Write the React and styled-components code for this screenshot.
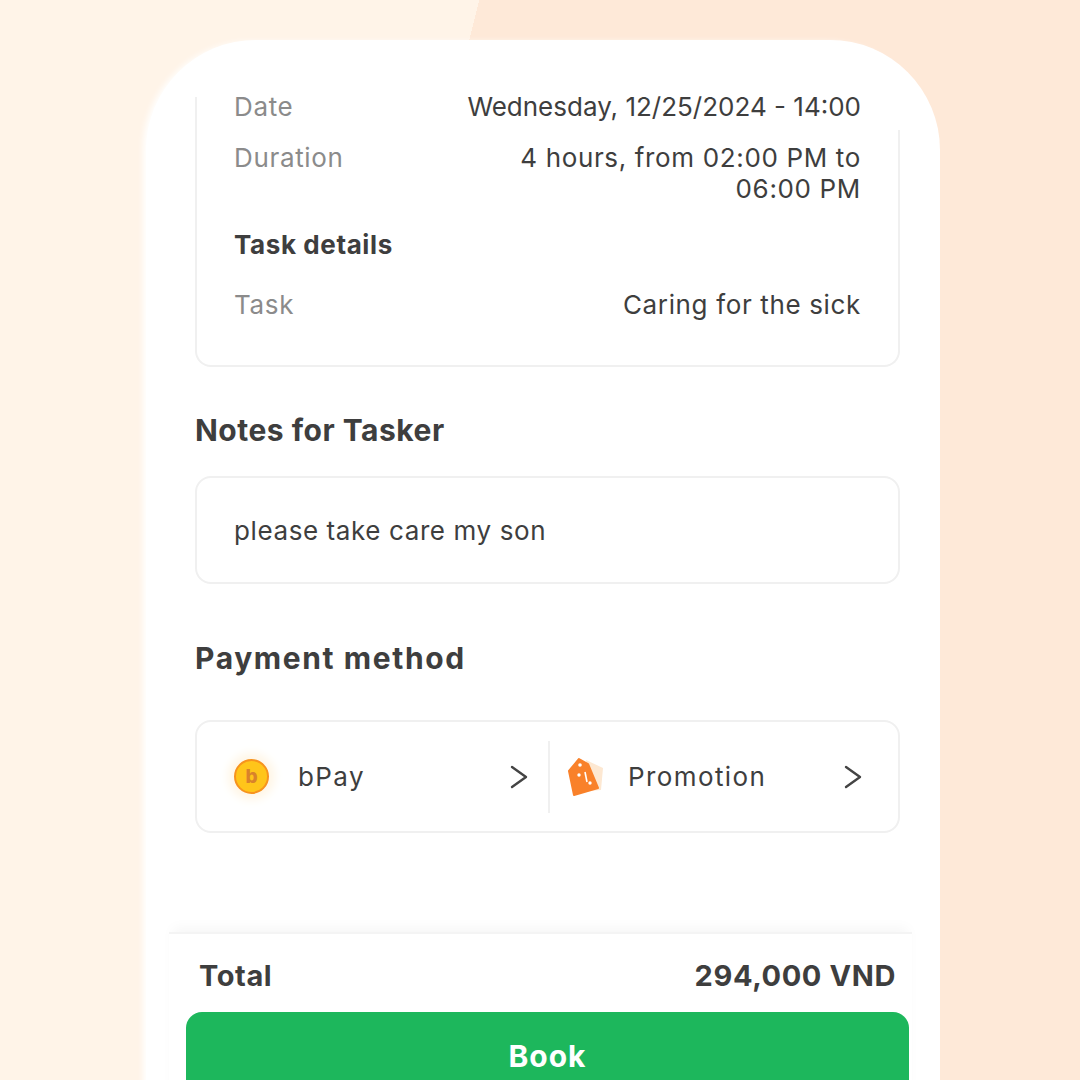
import React from 'react';
import styled, { createGlobalStyle } from 'styled-components';

const GlobalStyle = createGlobalStyle`
  html, body {
    margin: 0;
    padding: 0;
  }
  body {
    font-family: "Inter", "Open Sans", sans-serif;
    color: #3e3e3e;
  }
`;

const Page = styled.div`
  width: 1080px;
  height: 1080px;
  overflow: hidden;
  padding: 40px 140px 0 146px;
  box-sizing: border-box;
  background: linear-gradient(104deg, #fff4e8 465px, #fee9d8 465px);
`;

const Phone = styled.div`
  height: 1100px;
  background: #fff;
  border-radius: 110px 110px 0 0;
  box-shadow: -5px 0 6px -2px #fff;
  padding-top: 57px;
  box-sizing: border-box;
`;

const Content = styled.div`
  margin: 0 40px 0 49px;
  height: 835px;
`;

const Card = styled.div`
  position: relative;
  background: #fff;
  border: 2px solid #f0f0f0;
  border-radius: 16px;
  box-sizing: border-box;
`;

const DetailCard = styled(Card)`
  display: flow-root;
  border-top: none;
  border-radius: 0 0 16px 16px;
  height: 270px;
  padding: 0 37px;

  &::before {
    content: '';
    position: absolute;
    top: 0;
    right: -2px;
    width: 2px;
    height: 33px;
    background: #fff;
  }
`;

const Row = styled.div`
  display: flex;
  justify-content: space-between;
  align-items: flex-start;
  font-size: 26px;
  line-height: 31px;
  margin-top: ${(p) => p.$top}px;
  letter-spacing: 0.65px;
`;

const Label = styled.span`
  color: #8b8b8b;
`;

const Value = styled.span`
  text-align: right;
  max-width: 400px;
  letter-spacing: ${(p) => (p.$tight ? '0' : 'inherit')};
`;

const SubTitle = styled.div`
  font-size: 26px;
  line-height: 31px;
  font-weight: 700;
  letter-spacing: 0.6px;
  margin-top: 25px;
`;

const Heading = styled.h2`
  margin: ${(p) => p.$top}px 0 ${(p) => p.$bottom}px;
  font-size: 30px;
  line-height: 36px;
  font-weight: 700;
  letter-spacing: ${(p) => p.$spacing}px;
`;

const NoteCard = styled(Card)`
  height: 108px;
  display: flex;
  align-items: center;
  padding-left: 37px;
  font-size: 26px;
  letter-spacing: 0.6px;
`;

const PayCard = styled(Card)`
  height: 113px;
  display: flex;
  align-items: center;
`;

const PayItem = styled.div`
  flex: ${(p) => (p.$divided ? '1' : '0 0 351px')};
  box-sizing: border-box;
  height: 72px;
  display: flex;
  align-items: center;
  font-size: 26px;
  padding: ${(p) => p.$pad};
  border-left: ${(p) => (p.$divided ? '2px solid #f0f0f0' : 'none')};
`;

const PayName = styled.span`
  flex: 1;
  letter-spacing: 1.4px;
`;

const Coin = styled.div`
  width: 35px;
  height: 35px;
  border-radius: 50%;
  box-sizing: border-box;
  background: #ffc51a;
  border: 2px solid #f7931e;
  box-shadow: 0 0 10px 6px #fff6e6;
  color: #d9822b;
  font-size: 19px;
  font-weight: 800;
  display: flex;
  align-items: center;
  justify-content: center;
  margin: 0 29px 0 37px;
`;

const TagIcon = styled.svg`
  width: 40px;
  height: 44px;
  margin-right: 22px;
`;

const Chevron = styled.svg`
  width: 18px;
  height: 24px;
`;

const Footer = styled.div`
  margin: 0 28px 0 23px;
  border-top: 2px solid #f4f4f4;
  box-shadow: 0 -8px 12px -4px #f6f6f6;
  position: relative;
`;

const TotalRow = styled.div`
  display: flex;
  justify-content: space-between;
  align-items: center;
  box-sizing: border-box;
  height: 78px;
  padding: 4px 16px 0 30px;
  font-size: 29px;
  font-weight: 700;
  letter-spacing: 0.6px;
  background: #fff;
`;

const BookButton = styled.button`
  display: block;
  width: 723px;
  height: 87px;
  margin-left: 17px;
  border: none;
  border-radius: 16px;
  background: #1db75c;
  color: #fff;
  font-family: inherit;
  font-size: 30px;
  font-weight: 700;
  letter-spacing: 1px;
`;

const ChevronRight = () => (
  <Chevron viewBox="0 0 18 24">
    <polyline points="2,2 16,12 2,22" fill="none" stroke="#444" strokeWidth="2.4" strokeLinejoin="round" strokeLinecap="round" />
  </Chevron>
);

const App = () => (
  <Page>
    <GlobalStyle />
    <Phone>
      <Content>
        <DetailCard>
          <Row $top={-6}>
            <Label>Date</Label>
            <Value $tight>Wednesday, 12/25/2024 - 14:00</Value>
          </Row>
          <Row $top={20}>
            <Label>Duration</Label>
            <Value>4 hours, from 02:00 PM to 06:00 PM</Value>
          </Row>
          <SubTitle>Task details</SubTitle>
          <Row $top={29}>
            <Label>Task</Label>
            <Value>Caring for the sick</Value>
          </Row>
        </DetailCard>
        <Heading $top={45} $bottom={28} $spacing={0.5}>Notes for Tasker</Heading>
        <NoteCard>please take care my son</NoteCard>
        <Heading $top={56} $bottom={44} $spacing={1.6}>Payment method</Heading>
        <PayCard>
          <PayItem $pad="0 20px 0 0">
            <Coin>b</Coin>
            <PayName>bPay</PayName>
            <ChevronRight />
          </PayItem>
          <PayItem $divided $pad="0 36px 0 16px">
            <TagIcon viewBox="0 0 40 44">
              <polygon points="20,5 37,13 35,35 22,36" fill="#fde8d2" />
              <polygon points="13,4 22,9 32,33 8,40 3,16" fill="#f9812a" stroke="#f9812a" strokeWidth="2" strokeLinejoin="round" />
              <circle cx="14" cy="10" r="1.8" fill="#fff" />
              <circle cx="13" cy="20" r="1.7" fill="#fff" />
              <line x1="19" y1="17" x2="21" y2="27" stroke="#fff" strokeWidth="1.6" />
              <circle cx="24" cy="28" r="1.7" fill="#fff" />
            </TagIcon>
            <PayName>Promotion</PayName>
            <ChevronRight />
          </PayItem>
        </PayCard>
      </Content>
      <Footer>
        <TotalRow>
          <span>Total</span>
          <span>294,000 VND</span>
        </TotalRow>
        <BookButton>Book</BookButton>
      </Footer>
    </Phone>
  </Page>
);

export default App;
